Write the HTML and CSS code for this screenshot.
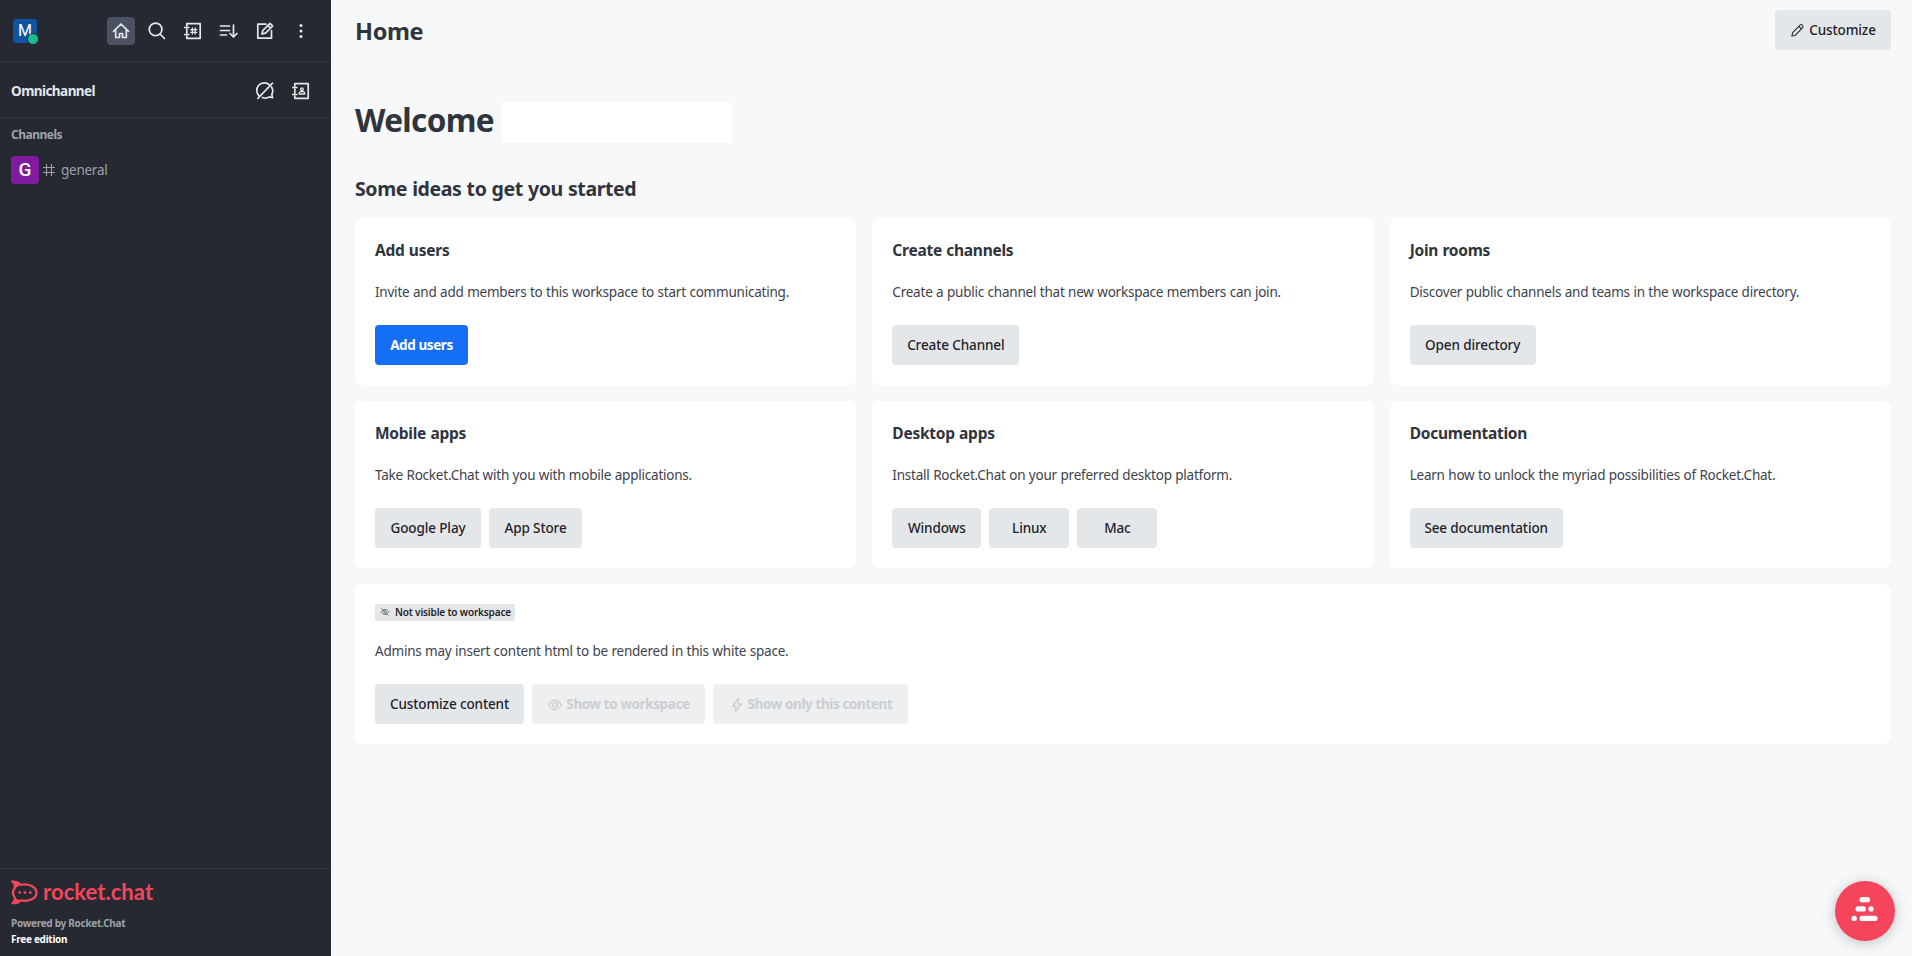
FILE: index.html
```html
<!DOCTYPE html>
<html lang="en">
<head>
<meta charset="utf-8">
<title>Home</title>
<link rel="stylesheet" href="styles.css">
</head>
<body>
<div class="app">
  <aside class="sidebar">
    <header class="topbar">
      <div class="avatar">M<span class="status"></span></div>
      <nav class="tools">
        <button class="tool active"><svg viewBox="0 0 20 20"><path d="M2.500 10.300 10 3l7.500 7.300M4.700 9v7.500h3.800v-4h3v4h3.800V9"/></svg></button>
        <button class="tool"><svg viewBox="0 0 20 20"><circle cx="8.600" cy="8.400" r="6.300"/><path d="m13 13 4.500 4.500"/></svg></button>
        <button class="tool"><svg viewBox="0 0 20 20"><path d="M3.800 5V2.700h13.400v14.600H3.800V15M3.800 8v4M1.800 6.500h4M1.800 13.500h4"/><path class="fine" d="M9.400 7v6M12.200 7v6M7.800 8.700h6M7.800 11.300h6"/></svg></button>
        <button class="tool"><svg viewBox="0 0 20 20"><path d="M1.500 5h9M1.500 9.500h9M1.500 14h6M14.500 4v12M11 12.500l3.500 3.500 3.500-3.500"/></svg></button>
        <button class="tool"><svg viewBox="0 0 20 20"><path d="M11 3.200H2.800v14h13.700V9.500M7 13l.8-3.500L15 2.300l2.700 2.700-7.200 7.200zM13 4.500l2.500 2.500"/></svg></button>
        <button class="tool"><svg class="solid" viewBox="0 0 20 20"><circle cx="10" cy="4.500" r="1.500"/><circle cx="10" cy="10" r="1.500"/><circle cx="10" cy="15.500" r="1.500"/></svg></button>
      </nav>
    </header>
    <section class="omni">
      <span class="omni-title">Omnichannel</span>
      <nav class="tools">
        <button class="tool"><svg viewBox="0 0 20 20"><path d="M4.200 15A7.500 7.500 0 0 1 14.500 3.800M16.500 6a7.500 7.500 0 0 1 .3 7.500l.8 3.200-3.200-.8a7.500 7.500 0 0 1-6.900.6M2.800 17.500 17.500 2.200"/></svg></button>
        <button class="tool"><svg viewBox="0 0 20 20"><path d="M3.800 5V2.700h13.400v14.600H3.800V15M3.800 8v4M1.800 6.500h4M1.800 13.500h4"/><path class="fine" d="M8.200 13v-1.500l1.500-1h2.400l1.500 1V13z"/><circle class="fine" cx="10.900" cy="8.300" r="1.300"/></svg></button>
      </nav>
    </section>
    <section class="rooms">
      <h2 class="rooms-title">Channels</h2>
      <div class="room">
        <span class="room-avatar">G</span>
        <svg class="hash" viewBox="0 0 14 14"><path d="M4.500 1v12M9.500 1v12M1 4.500h12M1 9.500h12"/></svg>
        <span class="room-name">general</span>
      </div>
    </section>
    <footer class="footer">
      <div class="logo">
        <svg viewBox="0 0 28 25"><path d="M2 2c3-.3 5.500.7 7.500 2.800C18 3 25.500 7 25.500 12.700S18 22 9.800 20.400C7.500 22.700 5 23.400 2 23c1.700-2 2.300-3.800 1.700-5.500-2.300-3-2.300-6.500 0-9.300C4.300 6 3.800 4 2 2z"/><path class="tail" d="M.5.500C4 0 7.500 1.500 9.500 4.500L4 8.500C4.500 5.500 3 3 .5.500zM.8 24c3-2 3.500-4 3-6l5.500 2.500C7 23.500 4 24.500.8 24z"/><g class="dots"><circle cx="8.700" cy="12.600" r="1.400"/><circle cx="14" cy="12.600" r="1.400"/><circle cx="19.300" cy="12.600" r="1.400"/></g></svg>
        <span class="wordmark">rocket.chat</span>
      </div>
      <div class="powered">Powered by Rocket.Chat</div>
      <div class="edition">Free edition</div>
    </footer>
  </aside>
  <main class="main">
    <header class="page-head">
      <h1 class="page-title">Home</h1>
      <button class="btn w116"><svg class="icon pencil" viewBox="0 0 16 16"><path d="m2 14 .8-3.800L11 2q1.300-.8 2.300.4t.4 2.300L5.800 13zM9.500 3.500l3 3"/></svg><span>Customize</span></button>
    </header>
    <div class="welcome"><h2 class="welcome-title">Welcome</h2><span class="name-box"></span></div>
    <h3 class="ideas">Some ideas to get you started</h3>
    <div class="grid">
      <article class="card"><h4>Add users</h4><p>Invite and add members to this workspace to start communicating.</p><div class="actions"><button class="btn primary w93">Add users</button></div></article>
      <article class="card"><h4>Create channels</h4><p>Create a public channel that new workspace members can join.</p><div class="actions"><button class="btn w127">Create Channel</button></div></article>
      <article class="card"><h4>Join rooms</h4><p>Discover public channels and teams in the workspace directory.</p><div class="actions"><button class="btn w126">Open directory</button></div></article>
      <article class="card"><h4>Mobile apps</h4><p>Take Rocket.Chat with you with mobile applications.</p><div class="actions"><button class="btn w106">Google Play</button><button class="btn w93">App Store</button></div></article>
      <article class="card"><h4>Desktop apps</h4><p>Install Rocket.Chat on your preferred desktop platform.</p><div class="actions"><button class="btn w89">Windows</button><button class="btn w80">Linux</button><button class="btn w80">Mac</button></div></article>
      <article class="card"><h4>Documentation</h4><p>Learn how to unlock the myriad possibilities of Rocket.Chat.</p><div class="actions"><button class="btn w153">See documentation</button></div></article>
      <article class="card wide">
        <span class="tag"><svg viewBox="0 0 12 12"><path d="M1 6q5-6.500 10 0-5 6.500-10 0zM1.500 1.500l9 9"/><circle cx="6" cy="6" r="1.700"/></svg><span>Not visible to workspace</span></span>
        <p>Admins may insert content html to be rendered in this white space.</p>
        <div class="actions">
          <button class="btn w149">Customize content</button>
          <button class="btn w173 disabled" disabled><svg class="icon" viewBox="0 0 16 16"><path d="M1.500 8q6.500-9.500 13 0-6.500 9.500-13 0z"/><circle cx="8" cy="8" r="2.300"/></svg><span>Show to workspace</span></button>
          <button class="btn w195 disabled" disabled><svg class="icon" viewBox="0 0 16 16"><path d="M9.500 1.500 3.500 9H7l-.7 5.500L12.500 7H9z"/></svg><span>Show only this content</span></button>
        </div>
      </article>
    </div>
  </main>
</div>
<button class="fab"><svg viewBox="0 0 28 26"><rect x="8.500" y="1" width="10.500" height="5.300" rx="2.650"/><rect x="4.500" y="10.300" width="10.500" height="5.300" rx="2.650"/><circle cx="20" cy="12.950" r="2.650"/><circle cx="3.200" cy="22.400" r="2.650"/><rect x="8.500" y="19.750" width="18" height="5.300" rx="2.650"/></svg></button>
</body>
</html>
```
FILE: styles.css
```css
* { box-sizing: border-box; }
body { margin: 0; font-family: "Noto Sans", "Open Sans", sans-serif; color: #2f343d; background: #f7f8fa; }
h1, h2, h3, h4, p { margin: 0; }
button { font-family: inherit; border: 0; padding: 0; white-space: nowrap; }
svg { display: block; flex: none; }
.app { display: flex; height: 956px; overflow: hidden; }
.sidebar { width: 331px; flex: none; display: flex; flex-direction: column; background: #262931; color: #e4e7ea; }
.topbar { display: flex; align-items: center; justify-content: space-between; height: 62px; padding: 0 16px 0 13px; border-bottom: 1px solid #353943; }
.avatar { position: relative; width: 24px; height: 24px; border-radius: 3px; background: #1053a0; color: #fff; font: 16px/24px Roboto, sans-serif; text-align: center; }
.status { position: absolute; left: 14px; top: 14px; width: 12px; height: 12px; border-radius: 50%; background: #1cbf89; border: 1px solid #262931; }
.tools { display: flex; gap: 8px; }
.tool { width: 28px; height: 28px; display: grid; place-items: center; border-radius: 4px; background: none; color: #e4e7ea; }
.tool.active { background: #4b5261; }
.tool svg { width: 20px; height: 20px; fill: none; stroke: currentColor; stroke-width: 1.7; stroke-linejoin: round; stroke-linecap: round; }
.tool .fine { stroke-width: 1.3; }
.tool .solid { fill: currentColor; stroke: none; }
.omni { display: flex; align-items: center; justify-content: space-between; height: 56px; padding: 3px 16px 0 11px; border-bottom: 1px solid #353943; }
.omni-title { font-size: 13.5px; line-height: 20px; font-weight: 700; letter-spacing: -.55px; padding-bottom: 1px; }
.rooms { flex: 1; padding: 8px 11px 0; color: #9ea2a8; }
.rooms-title { font-size: 12px; line-height: 18px; font-weight: 700; letter-spacing: -.5px; }
.room { display: flex; align-items: center; margin-top: 12px; height: 28px; font-size: 13.5px; }
.room-avatar { width: 28px; height: 28px; border-radius: 4px; background: #7f1b9f; color: #fff; text-align: center; font: 500 19px/28px Roboto, sans-serif; }
.hash { width: 14px; height: 14px; margin: 0 5px 0 3px; fill: none; stroke: #9ea2a8; stroke-width: 1.1; }
.room-name { letter-spacing: -.25px; }
.footer { height: 88px; padding: 11px 11px 0; border-top: 1px solid #353943; font-size: 10px; line-height: 16px; font-weight: 700; letter-spacing: -.28px; }
.logo { display: flex; align-items: center; height: 25px; gap: 4px; color: #f5455c; margin-bottom: 10px; }
.logo svg { width: 28px; height: 25px; fill: none; stroke: currentColor; stroke-width: 2.3; }
.logo .tail, .logo .dots { fill: currentColor; stroke: none; }
.wordmark { font: 700 22px/24px Lato, sans-serif; letter-spacing: .05px; margin-top: -2px; }
.powered { color: #9ea2a8; }
.edition { color: #fff; }
.main { flex: 1; padding: 0 21px 0 24px; }
.page-head { display: flex; align-items: center; justify-content: space-between; height: 60px; }
.page-title { font-size: 23.5px; line-height: 32px; font-weight: 700; padding-top: 2px; letter-spacing: -.35px; }
.welcome { display: flex; align-items: center; height: 40px; margin-top: 43px; }
.welcome-title { width: 146px; font-size: 31.5px; line-height: 40px; font-weight: 700; padding-bottom: 6px; letter-spacing: -.65px; white-space: nowrap; }
.name-box { width: 231px; height: 40px; background: #fff; }
.ideas { margin-top: 32px; font-size: 19.5px; line-height: 28px; font-weight: 700; letter-spacing: -.4px; word-spacing: .5px; }
.grid { display: grid; grid-template-columns: repeat(3, 1fr); gap: 16px; margin-top: 15px; }
.card { height: 167px; border-radius: 7px; background: #fff; padding: 20px; }
.card h4 { font-size: 15.5px; line-height: 24px; font-weight: 700; margin-bottom: 20px; letter-spacing: -.25px; word-spacing: .5px; }
.card p { font-size: 13.5px; line-height: 20px; font-weight: 400; color: #3d424b; margin-bottom: 23px; letter-spacing: -.22px; word-spacing: .25px; white-space: nowrap; }
.wide { grid-column: 1 / -1; height: 160px; }
.actions { display: flex; gap: 8px; }
.btn { display: flex; align-items: center; justify-content: center; height: 40px; border-radius: 4px; background: #e4e7ea; color: #1f2329; font-size: 13.5px; line-height: 20px; padding-bottom: 1px; font-weight: 500; letter-spacing: -.12px; }
.primary { background: #156ff5; color: #fff; font-weight: 700; letter-spacing: -.4px; }
.disabled { background: #eeeff1; color: #cbced1; font-weight: 700; letter-spacing: -.4px; }
.icon { width: 16px; height: 16px; margin-right: 3px; fill: none; stroke: currentColor; stroke-width: 1.3; stroke-linejoin: round; }
.disabled .icon { margin-top: 2px; }
.pencil { width: 15px; height: 15px; margin-right: 4px; margin-top: 1px; stroke-width: 1.1; }
.tag { display: flex; align-items: center; gap: 5px; width: 140px; height: 17px; padding: 0 0 1px 5px; margin-bottom: 20px; border-radius: 2px; background: #e4e7ea; color: #1f2329; font-size: 10px; line-height: 16px; font-weight: 600; letter-spacing: -.16px; white-space: nowrap; }
.tag svg { width: 10px; height: 10px; fill: none; stroke: #6c727a; stroke-width: 1; }
.w80 { width: 80px; } .w89 { width: 89px; } .w93 { width: 93px; } .w106 { width: 106px; } .w116 { width: 116px; }
.w126 { width: 126px; } .w127 { width: 127px; } .w149 { width: 149px; } .w153 { width: 153px; } .w173 { width: 173px; } .w195 { width: 195px; }
.fab { position: fixed; left: 1835px; top: 881px; width: 60px; height: 60px; display: grid; place-items: center; border-radius: 50%; background: #f5455c; box-shadow: 0 2px 14px rgba(0, 0, 0, .22); }
.fab svg { width: 28px; height: 26px; fill: #fff; margin-top: -4px; }
```
